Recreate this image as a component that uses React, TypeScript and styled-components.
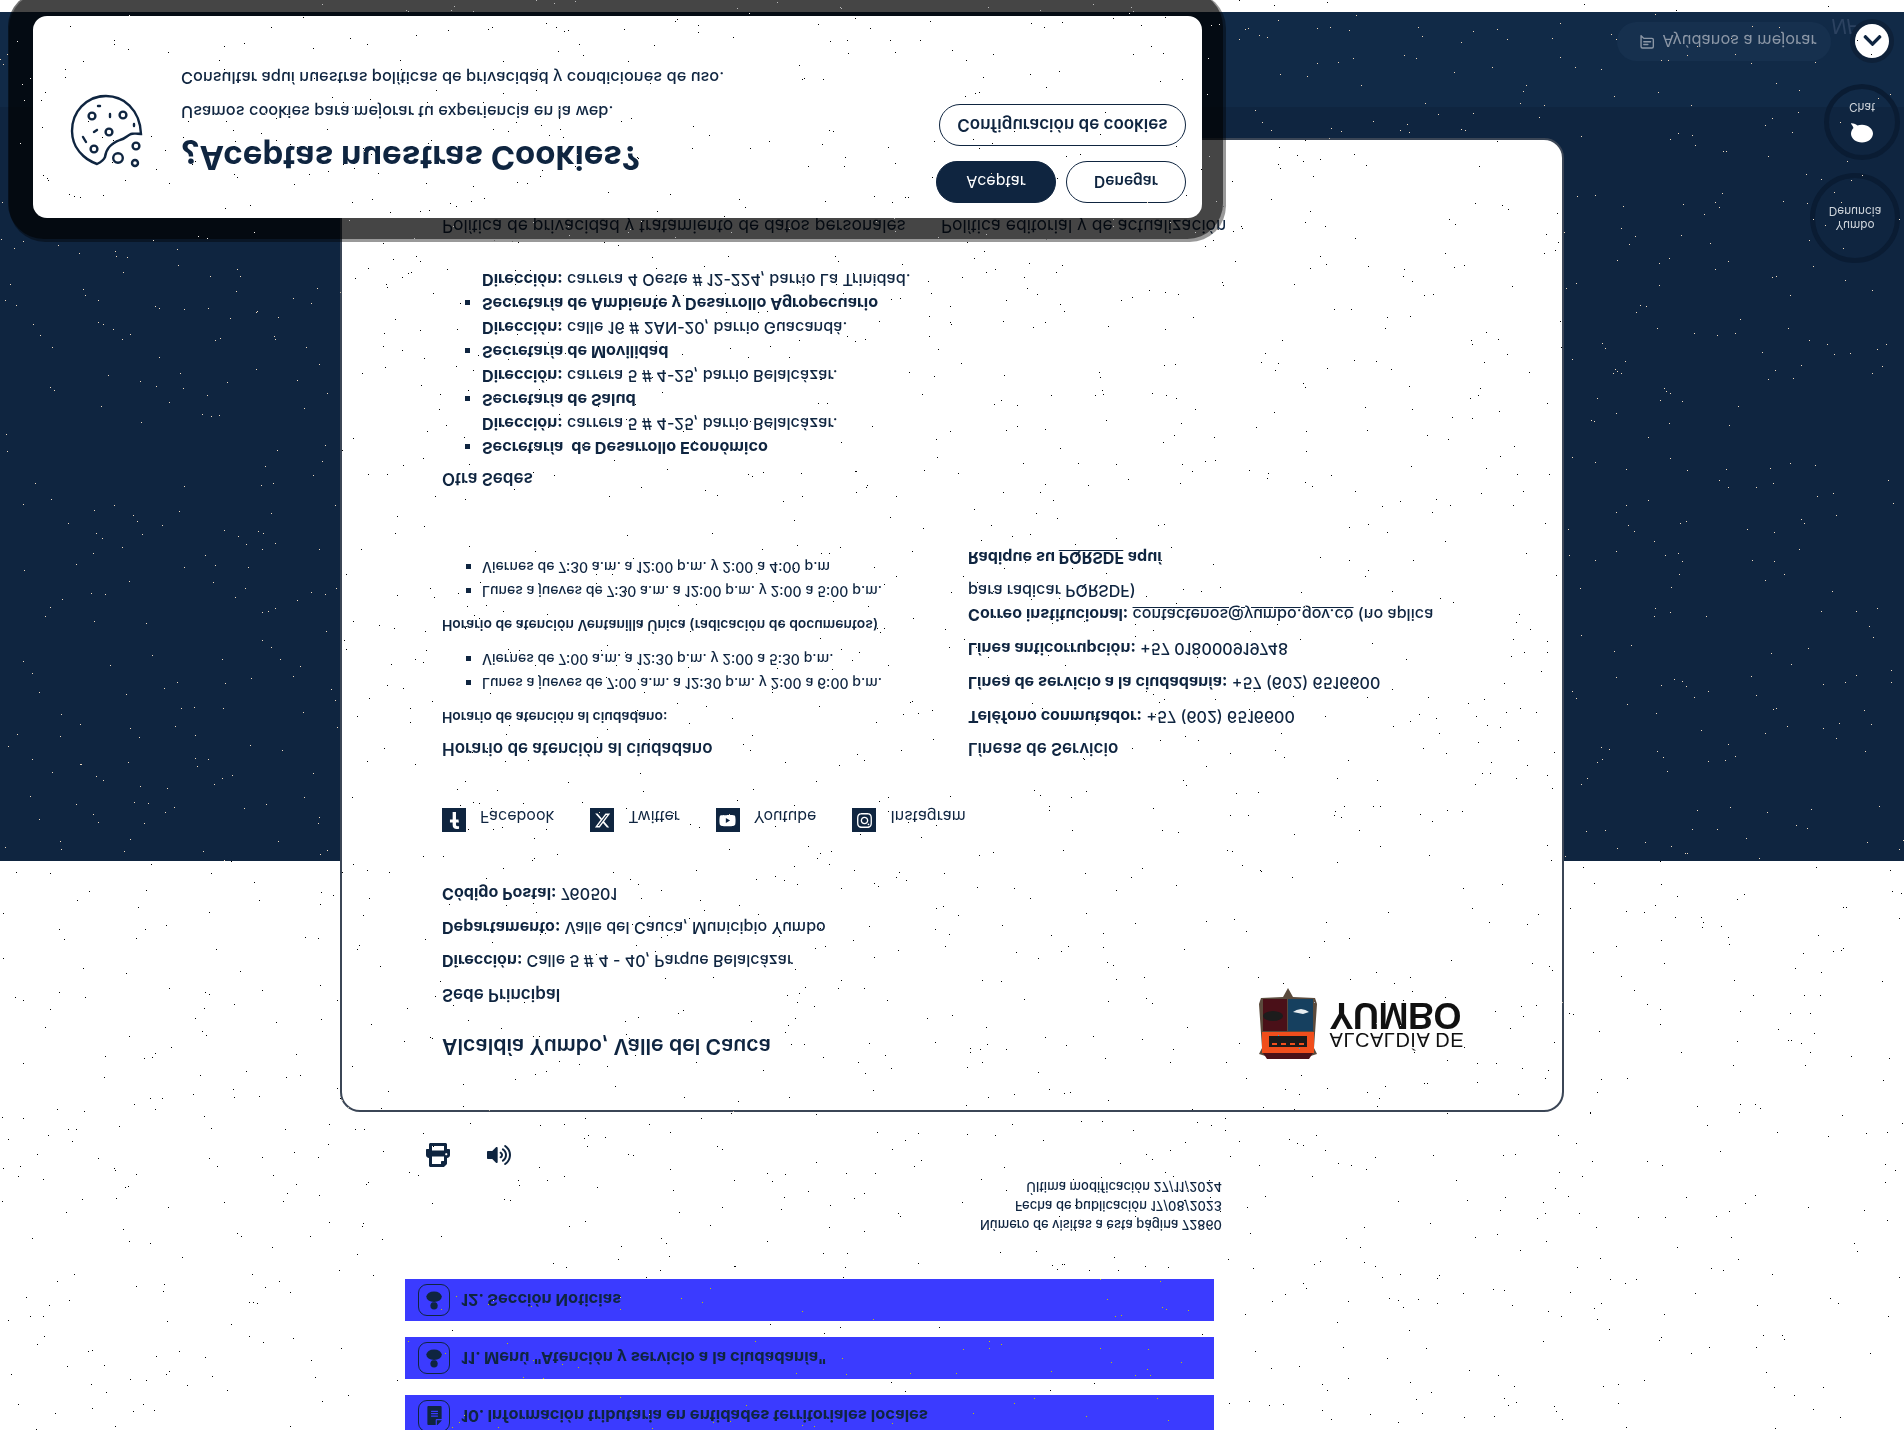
import { useMemo } from 'react'
import styled, { createGlobalStyle } from 'styled-components'
import { FaChevronUp, FaComment, FaFacebookF, FaFileAlt, FaInstagram, FaPrint, FaVolumeUp, FaYoutube } from 'react-icons/fa'
import { FaXTwitter } from 'react-icons/fa6'
import { LuMessageSquareText } from 'react-icons/lu'

const navy = '#0f2540'
const font = 'Inter, "Liberation Sans", Arial, sans-serif'

const GlobalStyle = createGlobalStyle`
  html, body {
    margin: 0;
    background: #fff;
    overflow: hidden;
  }
  * {
    box-sizing: border-box;
  }
`

const Stage = styled.div`
  position: relative;
  width: 1904px;
  height: 1430px;
  overflow: hidden;
  background: #fff;
`

// the whole capture is mirrored top to bottom
const Flipped = styled.div`
  position: relative;
  width: 1904px;
  height: 1430px;
  overflow: hidden;
  transform: scaleY(-1);
  font-family: ${font};
  color: ${navy};
`

const Grain = styled.svg`
  position: absolute;
  inset: 0;
  mix-blend-mode: difference;
  pointer-events: none;
`

const Content = styled.section`
  height: 576px;
  margin-top: -7px;
  padding-left: 405px;
`

const Bars = styled.div`
  display: flex;
  flex-direction: column;
  gap: 16px;
  width: 809px;
`

const Bar = styled.div`
  display: flex;
  align-items: center;
  gap: 11px;
  height: 42px;
  padding-left: 13px;
  background: #3b3bff;
  font-size: 16.4px;
  font-weight: 700;
`

const BarIcon = styled.span`
  display: flex;
  align-items: center;
  justify-content: center;
  width: 32px;
  height: 32px;
  border: 1.5px solid ${navy};
  border-radius: 9px;
  font-size: 19px;
`

const Meta = styled.div`
  width: 817px;
  margin-top: 45px;
  font-size: 13px;
  font-weight: 500;
  line-height: 19px;
  text-align: right;
`

const Tools = styled.div`
  display: flex;
  gap: 37px;
  height: 24px;
  margin: 10px 0 0 21px;
  font-size: 24px;
`

const Footer = styled.footer`
  display: flex;
  flex-direction: column;
  height: 849px;
  background: ${navy};
`

const Card = styled.div`
  height: 974px;
  width: 1224px;
  margin: -251px 0 0 340px;
  padding: 50px 0 0 100px;
  border: 2px solid #3b4656;
  border-radius: 20px;
  background: #fff;
`

const Intro = styled.div`
  display: flex;
  justify-content: space-between;
  padding-right: 98px;
`

const Logo = styled.div`
  display: flex;
  gap: 11px;
  height: 72px;
`

const LogoText = styled.div`
  display: flex;
  flex-direction: column;
  justify-content: center;
  color: #111;
  font-family: "Liberation Sans", Arial, sans-serif;
  font-weight: 700;
`

const LogoTop = styled.span`
  font-size: 20px;
  line-height: 18px;
  font-weight: 400;
  letter-spacing: 0.5px;
`

const LogoBig = styled.span`
  font-size: 36px;
  line-height: 32px;
  letter-spacing: -0.5px;
`

const Title = styled.h2`
  margin: 0;
  font-size: 21.2px;
  line-height: 26px;
  font-weight: 600;
`

const Subtitle = styled.h3<{ $top?: number }>`
  margin: ${(p) => p.$top ?? 0}px 0 0;
  font-size: 17px;
  line-height: 24px;
  font-weight: 600;
`

const Line = styled.p<{ $top?: number }>`
  margin: ${(p) => p.$top ?? 9.5}px 0 0;
  font-size: 16.1px;
  font-weight: 450;
  line-height: 24px;
  a {
    color: inherit;
    text-decoration: underline;
  }
`

const Socials = styled.div`
  display: flex;
  gap: 36px;
  height: 24px;
  margin-top: 50px;
`

const Social = styled.a`
  display: flex;
  gap: 14px;
  font-size: 16px;
  line-height: 30px;
`

const SocialIcon = styled.span`
  display: flex;
  align-items: center;
  justify-content: center;
  width: 24px;
  height: 24px;
  background: ${navy};
  color: #fff;
  font-size: 17px;
`

const Columns = styled.div`
  display: grid;
  grid-template-columns: 526px 480px;
  margin-top: 47px;
`

const SmallHead = styled.p<{ $top: number }>`
  margin: ${(p) => p.$top}px 0 0;
  font-size: 13.9px;
  line-height: 20px;
  font-weight: 600;
`

const Hours = styled.ul`
  margin: 12px 0 0;
  padding-left: 40px;
  list-style: square;
  font-size: 14.1px;
  font-weight: 450;
  line-height: 24px;
`

const Offices = styled.ul`
  margin: 7px 0 0;
  padding-left: 40px;
  list-style: square;
  font-size: 16.2px;
  font-weight: 450;
  line-height: 24px;
  li > span {
    display: block;
  }
`

const Policies = styled.div`
  display: flex;
  gap: 35px;
  margin-top: 30px;
  font-size: 17.5px;
  line-height: 24px;
`

const BottomBar = styled.div`
  height: 95px;
  margin-top: 31px;
  background: #112a47;
`

const Overlay = styled.div`
  position: absolute;
  bottom: 16px;
  left: 33px;
  display: flex;
  align-items: flex-start;
  width: 1169px;
  height: 202px;
  padding: 15px 16px 0 37px;
  border-radius: 14px;
  background: #fff;
  box-shadow: -2px 2px 0 23px rgba(0, 0, 0, 0.55), 0 0 0 24px rgba(0, 0, 0, 0.4);
`

const CookieBox = styled.div`
  flex: none;
  width: 76px;
  height: 76px;
  margin-top: 34px;
`

const CookieText = styled.div`
  flex: 1;
  margin: 26px 0 0 35px;
`

const CookieTitle = styled.h1`
  margin: 0;
  font-size: 33px;
  line-height: 38px;
  font-weight: 700;
`

const CookieLine = styled.p<{ $top: number }>`
  margin: ${(p) => p.$top}px 0 0;
  font-size: 16.4px;
  line-height: 20px;
  font-weight: 500;
`

const CookieActions = styled.div`
  display: flex;
  flex-direction: column;
  align-items: flex-end;
  gap: 15px;
  margin-left: auto;
`

const CookieRow = styled.div`
  display: flex;
  gap: 10px;
`

const CookieButton = styled.button<{ $primary?: boolean; $width: number; $size: number }>`
  width: ${(p) => p.$width}px;
  height: 42px;
  padding: 0;
  border: 1.5px solid ${navy};
  border-radius: 21px;
  background: ${(p) => (p.$primary ? navy : '#fff')};
  color: ${(p) => (p.$primary ? '#fff' : navy)};
  font-family: ${font};
  font-size: ${(p) => p.$size}px;
  font-weight: ${(p) => (p.$primary ? 400 : 600)};
`

const Pill = styled.div`
  position: absolute;
  right: 73px;
  bottom: 22px;
  display: flex;
  align-items: center;
  gap: 7px;
  width: 214px;
  height: 39px;
  padding-left: 22px;
  border-radius: 20px;
  background: #16304e;
  color: #8c97a6;
  font-size: 16.4px;
  white-space: nowrap;
`

const Faint = styled.span`
  position: absolute;
  right: 46px;
  bottom: 14px;
  color: #2c4260;
  font-size: 20px;
  font-style: italic;
`

const ScrollTop = styled.div`
  position: absolute;
  right: 15px;
  bottom: 24px;
  display: flex;
  align-items: center;
  justify-content: center;
  width: 34px;
  height: 34px;
  border-radius: 50%;
  background: #fff;
  box-shadow: 0 0 0 5px #0e2139;
  color: ${navy};
  font-size: 21px;
`

const Bubble = styled.div<{ $size: number; $bottom: number }>`
  position: absolute;
  right: 4px;
  bottom: ${(p) => p.$bottom}px;
  display: flex;
  flex-direction: column;
  align-items: center;
  justify-content: center;
  gap: 8px;
  width: ${(p) => p.$size}px;
  height: ${(p) => p.$size}px;
  border: 5px solid #0a1c33;
  border-radius: 50%;
  color: #cfd5db;
  font-size: 11.8px;
  line-height: 14px;
  text-align: center;
`

const CookieIcon = () => (
  <svg viewBox="30 34 76 76" width="76" height="76" fill="none" stroke={navy} strokeWidth="2.4" strokeLinecap="round">
    <g transform="matrix(1 0 0 -1 0 144)">
      <path d="M101 75 C100 50 83 37 66 37 C46 37 32 53 32 72 C32 88 43 100 57 105 C61 103 64 101 65 98 C66 90 70 85 80 81 C85 80 88 76 91 75 C94 74 98 75 101 75 Z" />
      <circle cx="52" cy="57" r="3.4" />
      <circle cx="83" cy="56" r="3.4" />
      <circle cx="69" cy="73" r="3.4" />
      <circle cx="54" cy="90" r="3.4" />
      <circle cx="78" cy="99" r="4.8" />
      <circle cx="96" cy="87" r="3.4" />
      <circle cx="95" cy="104" r="3" />
      <path d="M58 47 L60 47" />
      <path d="M70 55 L70 58" />
      <path d="M94 65 L94 67" />
      <path d="M54 73 L57 71" />
      <path d="M43 78 L46 83" />
    </g>
  </svg>
)

const PersonIcon = () => (
  <svg viewBox="0 0 32 32" width="29" height="29" fill={navy}>
    <circle cx="15.5" cy="9" r="4" />
    <ellipse cx="15.5" cy="19" rx="8.5" ry="5.8" />
  </svg>
)

const Shield = () => (
  <svg viewBox="0 0 62 72" width="62" height="72">
    <g transform="matrix(1 0 0 -1 0 72)">
      <path d="M31 0 L36 9 L58 10 L60 16 L57 60 L60 66 L44 71 L18 71 L2 66 L5 60 L2 16 L4 10 L26 9 Z" fill="#5a4a3c" />
      <rect x="6" y="11" width="24" height="32" fill="#4a1018" />
      <rect x="31" y="11" width="25" height="32" fill="#16405f" />
      <ellipse cx="16" cy="28" rx="10" ry="5" fill="#1c1c1c" />
      <path d="M36 24 Q44 18 52 24 L46 26 Z" fill="#e8edf0" />
      <rect x="5" y="44" width="52" height="21" fill="#f04e1c" />
      <path d="M12 48 H50 V59 H12 Z" fill="#1a1a1a" />
      <path d="M15 55 h5 v2 h-5z M24 55 h5 v2 h-5z M33 55 h5 v2 h-5z M42 55 h5 v2 h-5z" fill="#f04e1c" />
      <path d="M6 65 H56 L52 71 H10 Z" fill="#4a1018" />
    </g>
  </svg>
)

// deterministic salt and pepper, the capture is full of it
const useGrain = () =>
  useMemo(() => {
    let seed = 20240817
    const next = () => {
      seed = (seed + 0x6d2b79f5) | 0
      let t = Math.imul(seed ^ (seed >>> 15), 1 | seed)
      t = (t + Math.imul(t ^ (t >>> 7), 61 | t)) ^ t
      return ((t ^ (t >>> 14)) >>> 0) / 4294967296
    }
    let d = ''
    for (let i = 0; i < 2400; i++) {
      d += `M${Math.floor(next() * 1904)} ${Math.floor(next() * 1430)}h1v1h-1z`
    }
    return d
  }, [])

export default function App() {
  const grain = useGrain()

  return (
    <Stage>
      <GlobalStyle />
      <Flipped>
        <Content>
          <Bars>
            <Bar>
              <BarIcon>
                <FaFileAlt />
              </BarIcon>
              10. Información tributaria en entidades territoriales locales
            </Bar>
            <Bar>
              <BarIcon>
                <PersonIcon />
              </BarIcon>
              11. Menú "Atención y servicio a la ciudadanía"
            </Bar>
            <Bar>
              <BarIcon>
                <PersonIcon />
              </BarIcon>
              12. Sección Noticias
            </Bar>
          </Bars>
          <Meta>
            Número de visitas a esta página 72860
            <br />
            Fecha de publicación 17/08/2023
            <br />
            Última modificación 27/11/2024
          </Meta>
          <Tools>
            <FaPrint />
            <FaVolumeUp />
          </Tools>
        </Content>

        <Footer>
          <Card>
            <Intro>
              <div>
                <Title>Alcaldía Yumbo, Valle del Cauca</Title>
                <Subtitle $top={27}>Sede Principal</Subtitle>
                <Line>
                  <strong>Dirección:</strong> Calle 5 # 4 - 40, Parque Belalcázar
                </Line>
                <Line>
                  <strong>Departamento:</strong> Valle del Cauca, Municipio Yumbo
                </Line>
                <Line>
                  <strong>Código Postal:</strong> 760501
                </Line>
              </div>
              <Logo>
                <Shield />
                <LogoText>
                  <LogoTop>ALCALDÍA DE</LogoTop>
                  <LogoBig>YUMBO</LogoBig>
                </LogoText>
              </Logo>
            </Intro>
            <Socials>
              <Social>
                <SocialIcon>
                  <FaFacebookF />
                </SocialIcon>
                Facebook
              </Social>
              <Social>
                <SocialIcon>
                  <FaXTwitter />
                </SocialIcon>
                Twitter
              </Social>
              <Social>
                <SocialIcon>
                  <FaYoutube />
                </SocialIcon>
                Youtube
              </Social>
              <Social>
                <SocialIcon>
                  <FaInstagram />
                </SocialIcon>
                Instagram
              </Social>
            </Socials>

            <Columns>
              <div>
                <Subtitle>Horario de atención al ciudadano</Subtitle>
                <SmallHead $top={10}>Horario de atención al ciudadano:</SmallHead>
                <Hours>
                  <li>Lunes a jueves de 7:00 a.m. a 12:30 p.m. y 2:00 a 6:00 p.m.</li>
                  <li>Viernes de 7:00 a.m. a 12:30 p.m. y 2:00 a 5:30 p.m.</li>
                </Hours>
                <SmallHead $top={12}>Horario de atención Ventanilla Única (radicación de documentos)</SmallHead>
                <Hours>
                  <li>Lunes a jueves de 7:30 a.m. a 12:00 p.m. y 2:00 a 5:00 p.m.</li>
                  <li>Viernes de 7:30 a.m. a 12:00 p.m. y 2:00 a 4:00 p.m</li>
                </Hours>
              </div>
              <div>
                <Subtitle>Líneas de Servicio</Subtitle>
                <Line $top={8}>
                  <strong>Teléfono conmutador:</strong> +57 (602) 6516600
                </Line>
                <Line $top={10}>
                  <strong>Línea de servicio a la ciudadanía:</strong> +57 (602) 6516600
                </Line>
                <Line $top={10}>
                  <strong>Línea anticorrupción:</strong> +57 018000919748
                </Line>
                <Line $top={10}>
                  <strong>Correo institucional:</strong> <a>contactenos@yumbo.gov.co</a> (no aplica para radicar PQRSDF)
                </Line>
                <Line $top={9}>
                  <strong>
                    Radique su <a>PQRSDF</a> aquí
                  </strong>
                </Line>
              </div>
            </Columns>

            <Subtitle $top={55}>Otra Sedes</Subtitle>
            <Offices>
              <li>
                <strong>Secretaría&nbsp; de Desarrollo Económico</strong>
                <span>
                  <strong>Dirección:</strong> carrera 5 # 4-25, barrio Belalcázar.
                </span>
              </li>
              <li>
                <strong>Secretaría de Salud</strong>
                <span>
                  <strong>Dirección:</strong> carrera 5 # 4-25, barrio Belalcázar.
                </span>
              </li>
              <li>
                <strong>Secretaría de Movilidad</strong>
                <span>
                  <strong>Dirección:</strong> calle 16 # 2AN-20, barrio Guacandá.
                </span>
              </li>
              <li>
                <strong>Secretaría de Ambiente y Desarrollo Agropecuario</strong>
                <span>
                  <strong>Dirección:</strong> carrera 4 Oeste # 12-224, barrio La Trinidad.
                </span>
              </li>
            </Offices>
            <Policies>
              <span>Política de privacidad y tratamiento de datos personales</span>
              <span>Política editorial y de actualización</span>
            </Policies>
          </Card>
          <BottomBar />
        </Footer>

        <Overlay>
          <CookieBox>
            <CookieIcon />
          </CookieBox>
          <CookieText>
            <CookieTitle>¿Aceptas nuestras Cookies?</CookieTitle>
            <CookieLine $top={17}>Usamos cookies para mejorar tu experiencia en la web.</CookieLine>
            <CookieLine $top={14}>Consultar aquí nuestras políticas de privacidad y condiciones de uso.</CookieLine>
          </CookieText>
          <CookieActions>
            <CookieRow>
              <CookieButton $primary $width={120} $size={16}>
                Aceptar
              </CookieButton>
              <CookieButton $width={120} $size={15.5}>
                Denegar
              </CookieButton>
            </CookieRow>
            <CookieButton $width={247} $size={17}>
              Configuración de cookies
            </CookieButton>
          </CookieActions>
        </Overlay>

        <Faint>NF</Faint>
        <Pill>
          <LuMessageSquareText />
          Ayúdanos a mejorar
        </Pill>
        <ScrollTop>
          <FaChevronUp />
        </ScrollTop>
        <Bubble $size={76} $bottom={84}>
          <FaComment size={22} color="#fff" />
          Chat
        </Bubble>
        <Bubble $size={90} $bottom={173}>
          Yumbo
          <br />
          Denuncia
        </Bubble>
      </Flipped>
      <Grain width="1904" height="1430" viewBox="0 0 1904 1430">
        <path d={grain} fill="#fff" />
      </Grain>
    </Stage>
  )
}
